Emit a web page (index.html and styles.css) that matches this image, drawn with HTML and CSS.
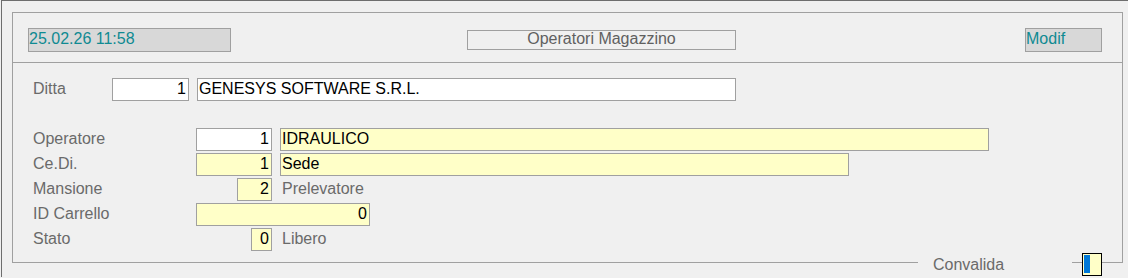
FILE: index.html
```html
<!DOCTYPE html>
<html lang="it">
<head>
  <meta charset="UTF-8">
  <title>Operatori Magazzino</title>
  <link rel="stylesheet" href="styles.css">
</head>
<body>
  <div class="window">
    <div class="frame">
      <div class="header">
        <div class="stamp">25.02.26 11:58</div>
        <div class="title">Operatori Magazzino</div>
        <div class="stamp mode">Modif</div>
      </div>

      <div class="content">
        <div class="ditta">
          <span class="label ditta-label">Ditta</span>
          <span class="field num white ditta-code">1</span>
          <span class="field white ditta-name">GENESYS SOFTWARE S.R.L.</span>
        </div>

        <div class="rows">
          <span class="label">Operatore</span>
          <span class="field num white code">1</span>
          <span class="field yellow desc op-desc">IDRAULICO</span>

          <span class="label">Ce.Di.</span>
          <span class="field num yellow code">1</span>
          <span class="field yellow desc cedi-desc">Sede</span>

          <span class="label">Mansione</span>
          <span class="field num yellow code code-sm">2</span>
          <span class="field plain desc">Prelevatore</span>

          <span class="label">ID Carrello</span>
          <span class="field num yellow carrello">0</span>

          <span class="label">Stato</span>
          <span class="field num yellow code code-xs">0</span>
          <span class="field plain desc">Libero</span>
        </div>
      </div>

      <div class="convalida">
        <span class="conv-label">Convalida</span>
        <span class="check"><span class="caret"></span></span>
      </div>
    </div>
  </div>
</body>
</html>
```

FILE: styles.css
```css
body {
  margin: 0;
  background: #f0f0f0;
  font-family: 'Liberation Sans', Arial, sans-serif;
  font-size: 16px;
  color: #000;
}
.window {
  margin-left: 1px;
  height: 277px;
  padding: 11px 0 0 10px;
  border-left: 1px solid #6e6e6e;
  border-top: 1px solid #6e6e6e;
  box-sizing: border-box;
}
.frame {
  position: relative;
  width: 1111px;
  height: 251px;
  border: 1px solid #a0a0a0;
  box-sizing: border-box;
}

/* header */
.header {
  display: flex;
  align-items: flex-start;
  height: 50px;
  padding: 15px 20px 0 15px;
  border-bottom: 1px solid #a0a0a0;
  box-sizing: border-box;
}
.stamp {
  width: 203px;
  height: 24px;
  line-height: 20px;
  border: 1px solid #a0a0a0;
  background: #d8d8d8;
  color: #0f8a92;
  box-sizing: border-box;
  white-space: nowrap;
}
.title {
  width: 269px;
  height: 20px;
  margin: 2px 0 0 236px;
  line-height: 16px;
  border: 1px solid #a0a0a0;
  color: #606060;
  text-align: center;
  box-sizing: border-box;
}
.mode {
  width: 77px;
  margin-left: auto;
}

/* body */
.content {
  padding: 15px 0 0 19px;
}
.label {
  color: #6a6a6a;
  line-height: 22px;
  padding-left: 1px;
  white-space: nowrap;
}
.field {
  display: block;
  height: 23px;
  line-height: 20px;
  padding: 0 2px 0 1px;
  border: 1px solid #a0a0a0;
  box-sizing: border-box;
  white-space: nowrap;
  overflow: hidden;
}
.num { text-align: right; }
.white { background: #fff; }
.yellow { background: #ffffc8; }
.plain {
  border-color: transparent;
  color: #6a6a6a;
}

.ditta {
  display: flex;
  align-items: flex-start;
  gap: 8px;
}
.ditta-label { width: 79px; margin-right: -8px; }
.ditta-code { width: 77px; }
.ditta-name { width: 539px; }

.rows {
  display: grid;
  grid-template-columns: 164px 76px auto;
  grid-auto-rows: 23px;
  row-gap: 2px;
  margin-top: 27px;
}
.code {
  width: 76px;
  justify-self: end;
}
.code-sm { width: 35px; }
.code-xs { width: 21px; }
.desc {
  margin-left: 8px;
  justify-self: start;
}
.op-desc { width: 709px; }
.cedi-desc { width: 569px; }
.carrello {
  grid-column: 2 / span 2;
  width: 174px;
  justify-self: start;
}

/* footer label sitting on the frame border */
.convalida {
  position: absolute;
  left: 905px;
  top: 240px;
  display: flex;
  align-items: center;
}
.conv-label {
  width: 154px;
  height: 23px;
  line-height: 23px;
  padding-left: 15px;
  background: #f0f0f0;
  color: #6a6a6a;
  box-sizing: border-box;
}
.check {
  display: block;
  width: 20px;
  height: 23px;
  margin-left: 10px;
  padding: 1px 0 2px 1px;
  border: 1px solid #000;
  background: #ffffc8;
  box-sizing: border-box;
}
.caret {
  display: block;
  width: 6px;
  height: 100%;
  background: #0078d7;
}
```
